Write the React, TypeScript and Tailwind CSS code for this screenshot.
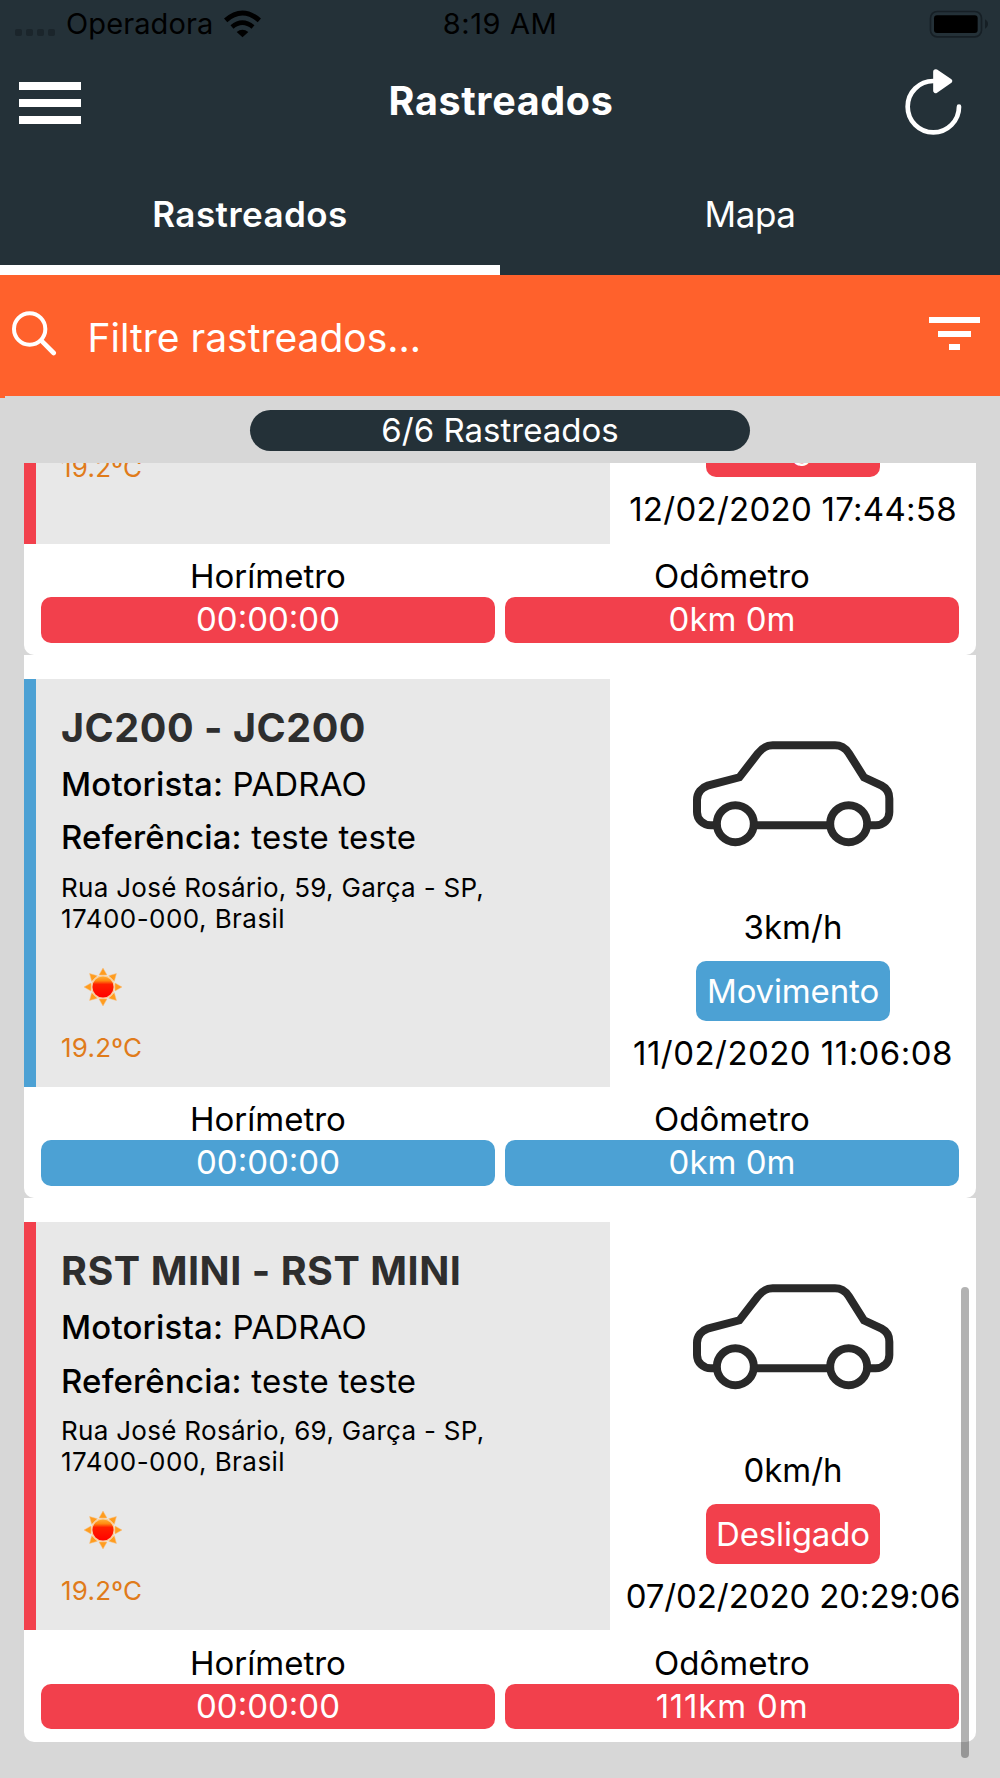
import { useState } from 'react';
import clsx from 'clsx';

type Status = 'Movimento' | 'Desligado';

interface Vehicle {
  id: number;
  name?: string;
  driver?: string;
  reference?: string;
  address?: [string, string];
  temperature: string;
  temperatureGap: string;
  speed?: string;
  status: Status;
  date: string;
  dateTracking: string;
  hourMeter: string;
  odometer: string;
  odometerTracking?: string;
}

const vehicles: Vehicle[] = [
  // scrolled under the counter, only its lower part is on screen
  {
    id: 1,
    temperature: '19.2ºC',
    temperatureGap: 'mb-[61px]',
    status: 'Desligado',
    date: '12/02/2020 17:44:58',
    dateTracking: 'tracking-[0.27px]',
    hourMeter: '00:00:00',
    odometer: '0km 0m',
  },
  {
    id: 2,
    name: 'JC200 - JC200',
    driver: 'PADRAO',
    reference: 'teste teste',
    address: ['Rua José Rosário, 59, Garça - SP,', '17400-000, Brasil'],
    temperature: '19.2ºC',
    temperatureGap: 'mb-[24.5px]',
    speed: '3km/h',
    status: 'Movimento',
    date: '11/02/2020 11:06:08',
    dateTracking: 'tracking-[0.46px]',
    hourMeter: '00:00:00',
    odometer: '0km 0m',
  },
  {
    id: 3,
    name: 'RST MINI - RST MINI',
    driver: 'PADRAO',
    reference: 'teste teste',
    address: ['Rua José Rosário, 69, Garça - SP,', '17400-000, Brasil'],
    temperature: '19.2ºC',
    temperatureGap: 'mb-[24.5px]',
    speed: '0km/h',
    status: 'Desligado',
    date: '07/02/2020 20:29:06',
    dateTracking: 'tracking-[-0.1px]',
    hourMeter: '00:00:00',
    odometer: '111km 0m',
    odometerTracking: 'tracking-[0.8px]',
  },
];

const statusColor: Record<Status, string> = {
  Movimento: 'bg-[#4ca1d4]',
  Desligado: 'bg-[#f2404c]',
};

function WifiIcon() {
  return (
    <svg width="37" height="28" viewBox="0 0 111 84" fill="none" stroke="#000">
      <path d="M5 31 Q55 -13 106 31" strokeWidth="15" />
      <path d="M24 51 Q55 25 87 51" strokeWidth="14" />
      <path d="M38 66 Q55 53 73 66 L55.500 82 Z" fill="#000" stroke="none" />
    </svg>
  );
}

function BatteryIcon() {
  return (
    <svg width="60" height="28" viewBox="0 0 180 84">
      <rect x="4.500" y="4.500" width="153" height="76" rx="20" fill="none" stroke="#161f25" strokeWidth="5" />
      <rect x="15" y="16" width="131" height="53" rx="9" fill="#000" />
      <path d="M168 28 C180 34 180 50 168 56 Z" fill="#161f25" />
    </svg>
  );
}

function RefreshIcon() {
  return (
    <svg width="57" height="66" viewBox="0 0 171 198" fill="none" stroke="#fff">
      <path d="M162 113 A77 77 0 1 1 85 36" strokeWidth="14" strokeLinecap="round" />
      <path d="M92 8 L134 36 L92 65 Z" fill="#fff" strokeWidth="15" strokeLinejoin="round" />
    </svg>
  );
}

function SearchIcon() {
  return (
    <svg width="46" height="45" viewBox="0 0 138 135" fill="none" stroke="#fff">
      <circle cx="53" cy="54" r="47" strokeWidth="12" />
      <path d="M88 89 L125 126" strokeWidth="14" strokeLinecap="round" />
    </svg>
  );
}

function CarIcon() {
  return (
    <svg width="201" height="106" viewBox="278 63 603 318" fill="none" stroke="#292929" strokeWidth="24">
      <path d="M345 316 H332 C308 316 290 298 290 276 V240 C290 218 304 203 322 197 L417 172 L472 101 Q491 76 517 76 H704 Q729 76 745 99 L791 172 L844 197 Q867 209 867 236 V276 C867 298 850 316 826 316 H808 M470 316 H682" />
      <circle cx="405" cy="311" r="55.500" />
      <circle cx="745" cy="311" r="55.500" />
    </svg>
  );
}

function SunIcon() {
  return (
    <svg width="38" height="38" viewBox="-19 -19 38 38">
      <defs>
        <linearGradient id="sun" x1="0" y1="0" x2="0" y2="1">
          <stop offset="0" stopColor="#ffb43c" />
          <stop offset="0.220" stopColor="#ff8a10" />
          <stop offset="0.380" stopColor="#ff2000" />
          <stop offset="1" stopColor="#ff0000" />
        </linearGradient>
      </defs>
      {[0, 45, 90, 135, 180, 225, 270, 315].map((angle) => (
        <path key={angle} d="M-4 -12 L0 -19 L4 -12 Z" fill="#ff9c1e" stroke="#f9c080" strokeWidth="0.500" transform={`rotate(${angle})`} />
      ))}
      <circle r="11.200" fill="url(#sun)" stroke="#fbcf9c" strokeWidth="1.300" />
    </svg>
  );
}

function Meter({ label, value, color, tracking }: { label: string; value: string; color: string; tracking?: string }) {
  return (
    <div className="flex-1 text-center text-[33px]">
      <div className="leading-[42px]">{label}</div>
      <div className={clsx('h-[45.5px] rounded-[10px] leading-[45.5px] text-white', color, tracking)}>{value}</div>
    </div>
  );
}

function VehicleCard({ vehicle }: { vehicle: Vehicle }) {
  const color = statusColor[vehicle.status];

  return (
    <div className="h-[543.33px] shrink-0 rounded-b-[10px] bg-white pt-6">
      <div className="flex h-[408px]">
        <div className={clsx('w-3', color)} />
        <div className="flex w-[574px] flex-col bg-[#e8e8e8] pt-6 pl-[25px]">
          {vehicle.name && (
            <>
              <h2 className="text-[39.5px] leading-[50px] font-bold tracking-[0.53px] text-[#2e2e2e]">{vehicle.name}</h2>
              <div className="mt-[5px] text-[33px] leading-[53.3px] tracking-[0.18px]">
                <p><span className="font-medium">Motorista:</span> {vehicle.driver}</p>
                <p><span className="font-medium">Referência:</span> {vehicle.reference}</p>
              </div>
            </>
          )}
          {vehicle.address && (
            <>
              <div className="mt-[7px] text-[26px] leading-[31px]">
                <p className="tracking-[0.3px]">{vehicle.address[0]}</p>
                <p className="tracking-[0.45px]">{vehicle.address[1]}</p>
              </div>
              <div className="mt-[34px] ml-[22.5px]"><SunIcon /></div>
            </>
          )}
          <p className={clsx('mt-auto text-[26px] leading-[30px] tracking-[0.2px] text-[#e07b1a]', vehicle.temperatureGap)}>
            {vehicle.temperature}
          </p>
        </div>
        <div className="flex flex-1 flex-col items-center justify-end pb-[14.5px] text-[33px] whitespace-nowrap">
          {vehicle.speed && (
            <>
              <CarIcon />
              <p className="mt-[60px] leading-[40px]">{vehicle.speed}</p>
            </>
          )}
          <span className={clsx('mt-[13.7px] rounded-[10px] px-[10.5px] leading-[60px] tracking-[-0.15px] text-white', color)}>
            {vehicle.status}
          </span>
          <p className={clsx('mt-3 leading-[40px]', vehicle.dateTracking)}>{vehicle.date}</p>
        </div>
      </div>
      <div className="flex gap-[10px] px-[17px] pt-[11.3px]">
        <Meter label="Horímetro" value={vehicle.hourMeter} color={color} />
        <Meter label="Odômetro" value={vehicle.odometer} color={color} tracking={vehicle.odometerTracking} />
      </div>
    </div>
  );
}

export default function App() {
  const [tab, setTab] = useState<'list' | 'map'>('list');

  return (
    <div className="flex h-[1778px] w-[1000px] flex-col overflow-hidden bg-[#d7d7d7] font-[Inter,sans-serif] text-black">
      <header className="h-[275px] bg-[#243138]">
        <div className="grid h-[47px] grid-cols-3 items-center text-[29px] leading-[47px]">
          <div className="flex items-center pl-[14.5px]">
            <div className="flex gap-1 pt-[18px]">
              {[0, 1, 2, 3].map((i) => (
                <span key={i} className="size-[7px] rounded-[2px] bg-[#1b252b]" />
              ))}
            </div>
            <span className="ml-[11.5px] tracking-[0.1px]">Operadora</span>
            <span className="ml-[10.5px]"><WifiIcon /></span>
          </div>
          <span className="text-center tracking-[0.6px]">8:19 AM</span>
          <div className="flex justify-end pr-[11.5px]"><BatteryIcon /></div>
        </div>

        <div className="flex h-[108px] items-center justify-between pr-[38px] pl-[19px]">
          <button className="mt-[4px] flex w-[62px] flex-col gap-[9.500px]">
            <span className="h-[7.500px] bg-white" />
            <span className="h-[7.500px] bg-white" />
            <span className="h-[7.500px] bg-white" />
          </button>
          <h1 className="mt-[2px] ml-[16px] text-[39.5px] font-bold tracking-[0.65px] text-white">Rastreados</h1>
          <button className="mt-[1px]"><RefreshIcon /></button>
        </div>

        <nav className="flex h-[120px] text-[35px] text-white">
          <button
            onClick={() => setTab('list')}
            className={clsx('h-[120px] flex-1 border-b-[10px] pt-[9px] tracking-[0.45px]', tab === 'list' ? 'border-white font-semibold' : 'border-transparent')}
          >
            Rastreados
          </button>
          <button
            onClick={() => setTab('map')}
            className={clsx('h-[120px] flex-1 border-b-[10px] pt-[9px] tracking-[-0.4px]', tab === 'map' ? 'border-white font-semibold' : 'border-transparent')}
          >
            Mapa
          </button>
        </nav>
      </header>

      <div className="flex h-[121px] items-center bg-[#ff612c] pr-[20px] pl-3">
        <span className="-mt-[4px]"><SearchIcon /></span>
        <span className="mt-[6px] ml-[29.5px] flex-1 text-[39px] text-white">Filtre rastreados...</span>
        <div className="-mt-[4px] flex w-[51px] flex-col items-center gap-[7.700px]">
          <span className="h-[6px] w-[51px] bg-white" />
          <span className="h-[6px] w-[33px] bg-white" />
          <span className="h-[6px] w-[11px] bg-white" />
        </div>
      </div>
      <div className="h-[2px] w-[5px] bg-[#ff612c]" />

      <div className="flex h-[65px] justify-center pt-3">
        <div className="h-[41px] w-[500px] rounded-full bg-[#243138] text-center text-[33px] leading-[41px] text-white">6/6 Rastreados</div>
      </div>

      <main className="relative flex flex-1 flex-col justify-end overflow-hidden px-6 pb-[36.3px]">
        {vehicles.map((vehicle) => (
          <VehicleCard key={vehicle.id} vehicle={vehicle} />
        ))}
        <div className="absolute right-[31px] bottom-5 h-[471px] w-2 rounded-full bg-black/30" />
      </main>
    </div>
  );
}
